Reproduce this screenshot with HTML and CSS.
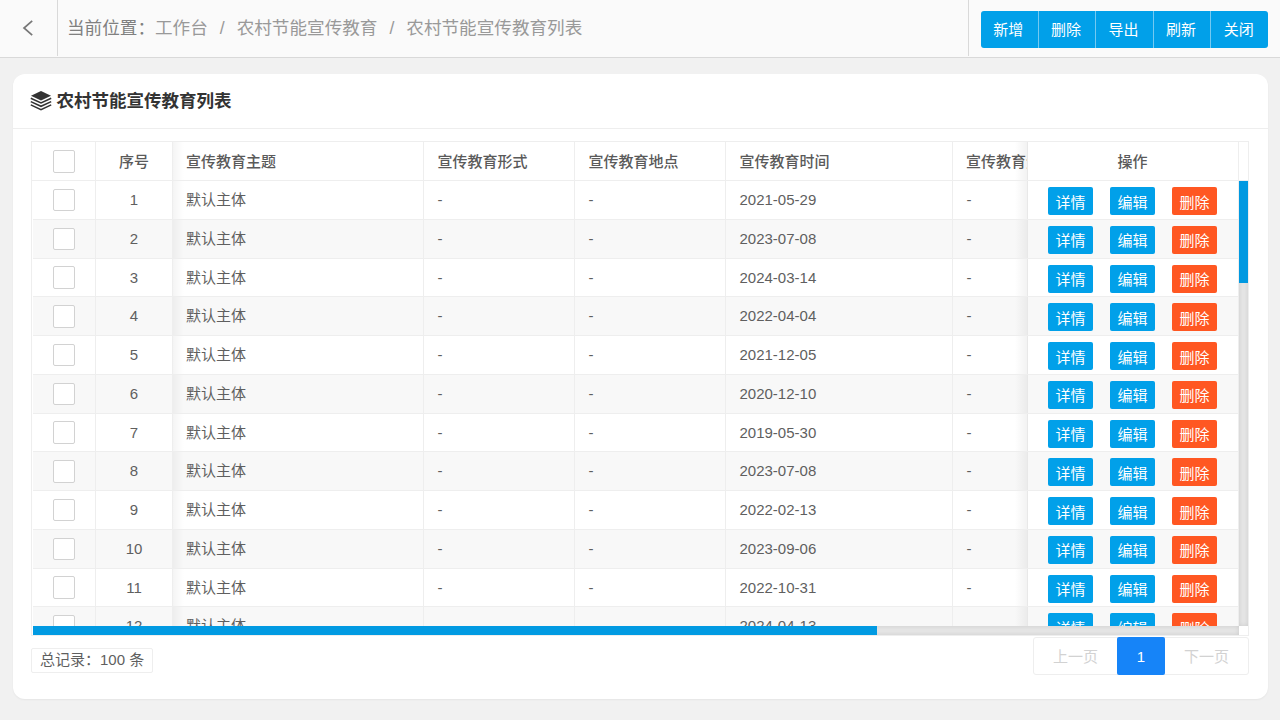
FILE: index.html
```html
<!DOCTYPE html>
<html lang="zh-CN">
<head>
<meta charset="utf-8">
<title>农村节能宣传教育列表</title>
<link rel="stylesheet" href="styles.css">
</head>
<body>
<header class="topbar">
  <a class="back"><svg width="12" height="18" viewBox="0 0 12 18"><path d="M10.200 1.800 2 9l8.200 7.200" fill="none" stroke="#777" stroke-width="1.700"/></svg></a>
  <nav class="crumbs"><span class="crumb-label">当前位置：</span><span>工作台</span><i>/</i><span>农村节能宣传教育</span><i>/</i><span>农村节能宣传教育列表</span></nav>
  <div class="tools"><div class="btn-group"><button>新增</button><button>删除</button><button>导出</button><button>刷新</button><button>关闭</button></div></div>
</header>
<main class="card">
  <div class="card-head">
    <svg class="layers" width="22" height="20" viewBox="0 0 22 20"><path d="M11 0 21 4.700 11 9.400 1 4.700z" fill="#333"/><path d="M.8 7.300 11 12l10.200-4.700M.8 10.600 11 15.300l10.200-4.700M.8 13.900 11 18.600l10.200-4.700" fill="none" stroke="#333" stroke-width="1.500"/></svg>
    <h1>农村节能宣传教育列表</h1>
  </div>
  <div class="card-body">
    <section class="table">
      <div class="thead">
        <div class="main-cols">
          <div class="cell mid"><span class="check"></span></div>
          <div class="cell mid">序号</div>
          <div class="cell edge">宣传教育主题</div>
          <div class="cell">宣传教育形式</div>
          <div class="cell">宣传教育地点</div>
          <div class="cell">宣传教育时间</div>
          <div class="cell last">宣传教育资料</div>
        </div>
        <div class="fixed-col"><div class="cell mid">操作</div></div>
        <div class="gutter"></div>
      </div>
      <div class="tbody">
        <div class="rows" id="rows"></div>
        <div class="vbar"><div class="vthumb"></div></div>
      </div>
      <div class="hbar"><div class="htrack"><div class="hthumb"></div></div><div class="corner"></div></div>
    </section>
    <footer class="foot">
      <div class="total">总记录：100 条</div>
      <div class="pager"><span>上一页</span><b>1</b><span>下一页</span></div>
    </footer>
  </div>
</main>
<script src="app.js"></script>
</body>
</html>
```
FILE: styles.css
```css
* { box-sizing: border-box; }
body { margin: 0; height: 720px; overflow: hidden; background: #f1f1f1; color: #5f5f5f; font: 15px/24px "Liberation Sans", "Noto Sans CJK SC", sans-serif; }
button { border: 0; margin: 0; padding: 0; color: #fff; background: #01a0e9; font: inherit; }
.topbar { display: flex; height: 58px; background: #fafafa; border-bottom: 1px solid #d9d9d9; }
.back { width: 58px; height: 56px; padding: 0 1px 1px 0; border-right: 1px solid #d9d9d9; display: flex; align-items: center; justify-content: center; }
.crumbs { flex: 1; height: 56px; padding-left: 9px; font-size: 17.6px; line-height: 56px; color: #999; white-space: nowrap; }
.crumb-label { color: #808080; }
.crumbs i { font-style: normal; margin: 0 12px; }
.tools { width: 312px; height: 56px; border-left: 1px solid #d9d9d9; padding: 11px 12px 0; }
.btn-group { display: flex; height: 37px; border-radius: 3px; overflow: hidden; }
.btn-group button { flex: 1; padding: 1px 2px 0 0; }
.btn-group button + button { border-left: 1px solid #74c9f1; }
.card { width: 1255px; height: 625px; margin: 16px 0 0 13px; background: #fff; border-radius: 12px; box-shadow: 0 1px 2px rgba(0,0,0,.05); }
.card-head { height: 55px; border-bottom: 1px solid #eee; display: flex; align-items: center; padding-left: 17px; gap: 4.500px; }
.card-head h1 { margin: 0; font-size: 17.5px; line-height: 54px; color: #333; font-weight: 700; }
.layers { margin-bottom: 1px; }
.card-body { padding: 12px 19px 0 18px; }
.table { height: 495px; border: 1px solid #eee; overflow: hidden; }
.thead { display: flex; height: 39px; color: #5a5a5a; font-weight: 500; border-bottom: 1px solid #eee; }
.thead .cell { padding-top: 1px; }
.main-cols { width: 996px; padding-left: 1px; overflow: hidden; display: grid; grid-template-columns: 63px 77px 251px 151px 151px 227px 151px; }
.cell { display: flex; align-items: center; padding-left: 13.500px; border-right: 1px solid #eee; white-space: nowrap; }
.cell.mid { justify-content: center; padding-left: 0; }
.cell.edge { background: linear-gradient(to right, rgba(0,0,0,.045), rgba(0,0,0,0) 11px); }
.cell.edge, .cell.last { padding-left: 13px; }
.check { width: 22px; height: 22.500px; border: 1px solid #d2d2d2; border-radius: 2px; background: #fff; }
.fixed-col { position: relative; width: 211px; }
.fixed-col::before { content: ""; position: absolute; top: 0; bottom: 0; left: -13px; width: 12px; background: linear-gradient(to left, rgba(0,0,0,.05), rgba(0,0,0,0)); border-right: 1px solid #e8e8e8; }
.row .fixed-col::before { left: -12px; }
.fixed-col .cell { height: 100%; }
.thead .fixed-col .cell { padding-right: 1px; }
.tbody { display: flex; height: 445px; overflow: hidden; }
.rows { width: 1207px; height: 445px; overflow: hidden; padding-left: 1px; }
.row { display: flex; height: 38.750px; border-bottom: 1px solid #eee; background: #fff; }
.row:nth-child(even) { background: #f8f8f8; }
.row .main-cols { width: 994px; padding-left: 0; }
.row .fixed-col { width: 212px; }
.row .cell { padding-top: .5px; }
.actions { height: 100%; display: flex; gap: 17px; padding: 6px 0 0 21px; border-right: 1px solid #eee; }
.actions button { width: 45px; height: 28px; padding-top: 3px; border-radius: 2px; line-height: 24px; }
.actions .danger { background: #ff5722; }
.vbar { width: 9px; background: #e6e6e6; box-shadow: inset 0 0 5px rgba(0,0,0,.12); }
.vthumb { height: 102px; background: #0199e1; }
.hbar { display: flex; height: 9px; padding-left: 1px; }
.htrack { width: 1206px; background: #e6e6e6; box-shadow: inset 0 0 5px rgba(0,0,0,.12); }
.hthumb { width: 844px; height: 9px; background: #019ae2; }
.foot { display: flex; justify-content: space-between; align-items: flex-start; padding-top: 1px; }
.total { width: 122px; height: 25px; margin-top: 11px; border: 1px solid #eee; border-radius: 2px; padding-left: 8px; line-height: 22px; white-space: nowrap; }
.pager { display: flex; width: 216px; height: 38px; border: 1px solid #eee; border-radius: 3px; line-height: 38px; text-align: center; color: #d2d2d2; }
.pager span { flex: 1; }
.pager b { width: 48px; height: 38px; margin-top: -1px; border-radius: 2px; background: #1684f8; color: #fff; font-weight: 400; line-height: 40px; }
```
FILE: app.js
```javascript
const dates = ["2021-05-29", "2023-07-08", "2024-03-14", "2022-04-04", "2021-12-05", "2020-12-10", "2019-05-30", "2023-07-08", "2022-02-13", "2023-09-06", "2022-10-31", "2024-04-13"];
document.getElementById("rows").innerHTML = dates.map((date, i) => `
  <div class="row">
    <div class="main-cols">
      <div class="cell mid"><span class="check"></span></div>
      <div class="cell mid">${i + 1}</div>
      <div class="cell edge">默认主体</div>
      <div class="cell">-</div>
      <div class="cell">-</div>
      <div class="cell">${date}</div>
      <div class="cell">-</div>
    </div>
    <div class="fixed-col"><div class="actions"><button>详情</button><button>编辑</button><button class="danger">删除</button></div></div>
  </div>`).join("");
```
